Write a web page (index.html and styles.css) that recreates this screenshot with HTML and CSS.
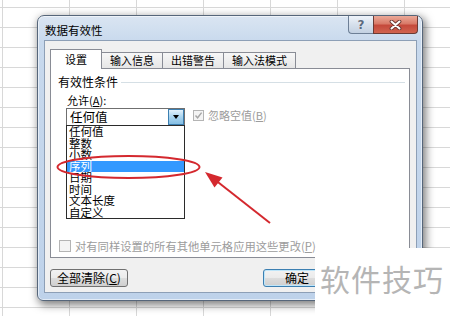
FILE: index.html
```html
<!DOCTYPE html>
<html lang="zh">
<head>
<meta charset="utf-8">
<title>数据有效性</title>
<link rel="stylesheet" href="styles.css">
</head>
<body>
<div class="dialog">
  <div class="titlebar">
    <span class="title">数据有效性</span>
    <div class="caps">
      <span class="help">?</span>
      <span class="close"><svg width="13" height="10" viewBox="0 0 13 10"><path d="M2.5 1.5 L10.5 8.5 M10.5 1.5 L2.5 8.5" stroke="#6a3630" stroke-width="3.8" stroke-linecap="round"/><path d="M2.5 1.5 L10.5 8.5 M10.5 1.5 L2.5 8.5" stroke="#fff" stroke-width="2" stroke-linecap="round"/></svg></span>
    </div>
  </div>
  <div class="client">
    <div class="tabs">
      <div class="tab active">设置</div>
      <div class="tab">输入信息</div>
      <div class="tab">出错警告</div>
      <div class="tab">输入法模式</div>
    </div>
    <div class="panel">
      <div class="group"><span>有效性条件</span><span class="line"></span></div>
      <div class="allow">允许(<u>A</u>):</div>
      <div class="row">
        <div class="combo-wrap">
          <div class="combo"><span class="val">任何值</span><span class="drop"></span></div>
          <ul class="list">
            <li>任何值</li>
            <li>整数</li>
            <li>小数</li>
            <li class="sel">序列</li>
            <li>日期</li>
            <li>时间</li>
            <li>文本长度</li>
            <li>自定义</li>
          </ul>
        </div>
        <div class="chk ignore"><span class="box"><svg width="9" height="9" viewBox="0 0 9 9"><path d="M1.5 4.5 L3.6 6.8 L7.6 1.6" fill="none" stroke="#a6a6a6" stroke-width="1.4"/></svg></span>忽略空值(<u>B</u>)</div>
      </div>
      <div class="chk applyall"><span class="box big"></span>对有同样设置的所有其他单元格应用这些更改(<u>P</u>)</div>
    </div>
    <div class="buttons">
      <button class="btn clear">全部清除(<u>C</u>)</button>
      <div class="right">
        <button class="btn ok">确定</button>
        <button class="btn cancel" aria-label="取消"></button>
      </div>
    </div>
  </div>
</div>
<svg class="annot" width="450" height="316" viewBox="0 0 450 316">
  <ellipse cx="128.5" cy="167" rx="71" ry="11" fill="none" stroke="#d4282e" stroke-width="2"/>
  <line x1="270" y1="223" x2="214" y2="179" stroke="#d4282e" stroke-width="2"/>
  <polygon points="205,172 222.5,177.5 214.5,187.5" fill="#d4282e"/>
</svg>
<div class="wm">软件技巧</div>
</body>
</html>
```
FILE: styles.css
```css
html, body {
  margin: 0;
}
body {
  width: 450px;
  height: 316px;
  overflow: hidden;
  position: relative;
  background-color: #fff;
  background-image:
    linear-gradient(to right, #d8d8d8 1px, transparent 1px),
    linear-gradient(to bottom, #d8d8d8 1px, transparent 1px);
  background-size: 67px 20px;
  background-position: 2px 7px;
  font-family: "Noto Sans CJK SC", "Noto Sans", sans-serif;
  font-size: 11px;
  color: #000;
}
u { text-decoration: underline; }

.dialog {
  position: absolute;
  left: 37px;
  top: 15px;
  width: 386px;
  height: 286px;
  box-sizing: border-box;
  border: 1px solid #56667a;
  border-radius: 7px 7px 6px 6px;
  background: linear-gradient(#dae5f2, #c8d9ed 26px, #bed2ea);
  box-shadow: 2px 3px 9px 1px rgba(0,0,0,.5), inset 0 0 0 1px rgba(255,255,255,.55);
  padding: 0 5px 7px 6px;
  display: flex;
  flex-direction: column;
}
.titlebar {
  height: 24px;
  flex-shrink: 0;
  display: flex;
  align-items: flex-start;
}
.title {
  margin: 7px 0 0 1px;
  font-size: 11.5px;
  line-height: 14px;
}
.caps {
  margin-left: auto;
  margin-right: -1px;
  display: flex;
}
.help {
  width: 25px;
  height: 18px;
  box-sizing: border-box;
  border: 1px solid #6d7f96;
  border-top: none;
  border-right: none;
  border-radius: 0 0 0 4px;
  background: linear-gradient(#eef3fa, #d6e0ec 50%, #c3d1e2);
  display: flex;
  align-items: center;
  justify-content: center;
  font: bold 12px "DejaVu Sans", sans-serif;
  color: #5a6a7e;
  text-shadow: 0 0 1px #fff;
}
.close {
  width: 45px;
  height: 18px;
  box-sizing: border-box;
  border: 1px solid #6b3b35;
  border-top: none;
  border-radius: 0 0 4px 0;
  background: linear-gradient(#eba998, #d97a68 45%, #c5493b 55%, #d0634f);
  display: flex;
  align-items: center;
  justify-content: center;
}

.client {
  flex: 1;
  background: #f0f0f0;
  border: 1px solid #8d9fb6;
  padding: 8px 6px 5px 5px;
  display: flex;
  flex-direction: column;
}
.tabs {
  display: flex;
  align-items: flex-end;
  height: 19px;
  position: relative;
  z-index: 1;
}
.tab {
  height: 16px;
  box-sizing: border-box;
  border: 1px solid #898c95;
  border-bottom: none;
  margin-left: -1px;
  padding: 0 8px;
  line-height: 15px;
  background: linear-gradient(#f7f7f7, #e6e6e6);
}
.tab:first-child { margin-left: 0; }
.tab.active {
  height: 20px;
  margin-bottom: -1px;
  background: #fff;
  padding: 0 14px;
  line-height: 18px;
  position: relative;
  z-index: 2;
}
.panel {
  height: 190px;
  box-sizing: border-box;
  background: #fff;
  border: 1px solid #898c95;
  padding: 6px 4px 4px 7px;
  display: flex;
  flex-direction: column;
  position: relative;
}
.group {
  display: flex;
  align-items: center;
  font-size: 12px;
  line-height: 14px;
}
.group .line {
  flex: 1;
  border-top: 1px solid #d5dfe5;
  margin: 1px 0 0 3px;
}
.allow {
  margin: 4px 0 0 9px;
  line-height: 14px;
}
.row {
  display: flex;
  align-items: flex-start;
  margin: 1px 0 0 8px;
}
.combo-wrap {
  position: relative;
  width: 119px;
  height: 18px;
}
.combo {
  height: 18px;
  box-sizing: border-box;
  border: 1px solid #6f6f6f;
  display: flex;
  align-items: center;
  background: #fff;
}
.combo .val {
  flex: 1;
  padding-left: 3px;
  font-size: 12.5px;
  line-height: 16px;
}
.drop {
  width: 16px;
  height: 16px;
  box-sizing: border-box;
  border: 1px solid #3c7fb1;
  background: linear-gradient(#e3f1fb, #a9d4ef 50%, #86bfe4);
  display: flex;
  align-items: center;
  justify-content: center;
}
.drop::after {
  content: "";
  border-left: 3.5px solid transparent;
  border-right: 3.5px solid transparent;
  border-top: 4px solid #000;
}
.list {
  position: absolute;
  left: 0;
  top: 17px;
  width: 100%;
  box-sizing: border-box;
  border: 1px solid #2b2b2b;
  background: #fff;
  margin: 0;
  padding: 0;
  list-style: none;
  z-index: 3;
}
.list li {
  height: 11.5px;
  line-height: 11.5px;
  font-size: 11.5px;
  padding-left: 2px;
  white-space: nowrap;
}
.list li.sel {
  background: #3399ff;
  color: #fff;
}
.chk {
  display: flex;
  align-items: center;
  color: #9c9c9c;
  line-height: 13px;
}
.ignore {
  margin: 1px 0 0 8px;
}
.box {
  width: 11px;
  height: 11px;
  box-sizing: border-box;
  border: 1px solid #b4b4b4;
  background: #f4f4f4;
  margin-right: 4px;
  display: flex;
  align-items: center;
  justify-content: center;
}
.box.big {
  width: 12px;
  height: 12px;
}
.applyall {
  margin-top: auto;
  margin-left: 1px;
  font-size: 11.3px;
  line-height: 14px;
}
.buttons {
  display: flex;
  justify-content: space-between;
  margin-top: 11px;
  height: 18px;
}
.right {
  display: flex;
  gap: 11px;
}
.btn {
  height: 18px;
  box-sizing: border-box;
  border: 1px solid #707070;
  border-radius: 3px;
  background: linear-gradient(#f2f2f2, #ebebeb 50%, #dddddd 50%, #cfcfcf);
  font-family: "Noto Sans CJK SC", sans-serif;
  font-size: 12px;
  line-height: 16px;
  padding: 0;
  margin: 0;
  color: #000;
  display: flex;
  align-items: center;
  justify-content: center;
}
.clear { width: 78px; }
.ok, .cancel { width: 68px; }
.ok {
  border-color: #3c7fb1;
  box-shadow: inset 0 0 0 1px #bfe6fa;
}
.annot {
  position: absolute;
  left: 0;
  top: 0;
  z-index: 5;
  pointer-events: none;
}
.wm {
  position: absolute;
  left: 315px;
  top: 248px;
  width: 135px;
  height: 68px;
  box-sizing: border-box;
  background: #fff;
  z-index: 6;
  padding: 13px 0 0 5px;
  font-size: 30px;
  line-height: 34px;
  color: #b5b5b5;
  letter-spacing: 1px;
  white-space: nowrap;
}
```
